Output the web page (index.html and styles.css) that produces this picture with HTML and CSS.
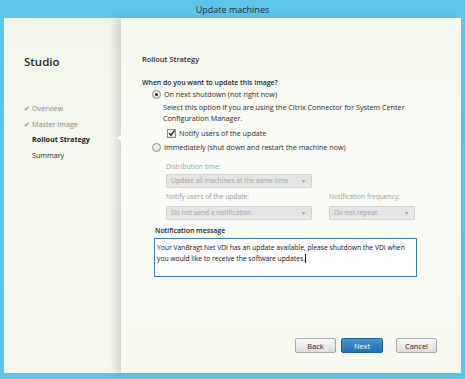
FILE: index.html
```html
<!DOCTYPE html>
<html>
<head>
<meta charset="utf-8">
<link rel="stylesheet" href="styles.css">
</head>
<body>
<div class="titlebar">Update machines</div>
<div class="frame">
  <aside class="sidebar">
    <div class="brand">Studio</div>
    <ul class="steps">
      <li class="done"><span class="tick">✔</span>Overview</li>
      <li class="done"><span class="tick">✔</span>Master Image</li>
      <li class="current">Rollout Strategy</li>
      <li>Summary</li>
    </ul>
  </aside>
  <main class="main">
    <span class="notch"></span>
    <h2 class="heading">Rollout Strategy</h2>
    <div class="question">When do you want to update this image?</div>
    <div class="option"><span class="radio checked"></span>On next shutdown (not right now)</div>
    <div class="desc">Select this option if you are using the Citrix Connector for System Center<br>Configuration Manager.</div>
    <div class="check-row"><span class="checkbox">
      <svg width="8" height="8" viewBox="0 0 8 8"><path d="M1.2 4.2 L3.2 6.3 L7 1.2" fill="none" stroke="#222" stroke-width="1.4"/></svg>
    </span>Notify users of the update</div>
    <div class="option second"><span class="radio"></span>Immediately (shut down and restart the machine now)</div>
    <div class="disabled">
      <div class="label first">Distribution time:</div>
      <div class="select wide">Update all machines at the same time<span class="arrow">▾</span></div>
      <div class="pair">
        <div class="col">
          <div class="label">Notify users of the update:</div>
          <div class="select wide">Do not send a notification<span class="arrow">▾</span></div>
        </div>
        <div class="col">
          <div class="label">Notification frequency:</div>
          <div class="select narrow">Do not repeat<span class="arrow">▾</span></div>
        </div>
      </div>
    </div>
    <div class="msg-label">Notification message</div>
    <div class="textarea">Your VanBragt.Net VDI has an update available, please shutdown the VDI when<br>you would like to receive the software updates.<span class="caret"></span></div>
    <div class="buttons">
      <button class="btn">Back</button>
      <button class="btn primary">Next</button>
      <button class="btn cancel">Cancel</button>
    </div>
  </main>
</div>
</body>
</html>
```
FILE: styles.css
```css
html, body {
  margin: 0;
  padding: 0;
}
body {
  width: 465px;
  height: 379px;
  background: #5cc6ea;
  font-family: "Open Sans", "Noto Sans", sans-serif;
  font-size: 7.2px;
  color: #2b2b2b;
  overflow: hidden;
}
.titlebar {
  height: 18px;
  line-height: 19px;
  text-align: center;
  font-size: 9px;
  color: #1c2a33;
}
.frame {
  margin: 0 4px;
  height: 355px;
  display: flex;
  background: #f3f6ea;
}
.sidebar {
  width: 117px;
  flex: none;
  background: linear-gradient(180deg, #f1f5e8 0%, #f6f8f0 40%, #f4f7ec 100%);
  padding: 36px 0 0 0;
  box-sizing: border-box;
}
.brand {
  font-size: 11.5px;
  font-weight: 600;
  color: #2a2a2a;
  padding-left: 20px;
  line-height: 16px;
}
.steps {
  list-style: none;
  margin: 31px 0 0 0;
  padding: 0 0 0 28px;
}
.steps li {
  line-height: 15.6px;
  height: 15.6px;
  position: relative;
  color: #222;
}
.steps li.done {
  color: #8a8a8a;
}
.steps li.current {
  font-weight: 700;
  color: #1a1a1a;
}
.tick {
  position: absolute;
  left: -8px;
  font-size: 6.5px;
  color: #8a8a8a;
}
.main {
  flex: 1;
  position: relative;
  display: flex;
  flex-direction: column;
  padding: 36px 24px 20px 21px;
  background: linear-gradient(180deg, #f6f8ef 0%, #fafbf6 45%, #f7f9f0 100%);
  box-shadow: -5px 0 7px rgba(60, 60, 60, 0.18);
  min-width: 0;
}
.notch {
  position: absolute;
  left: -4px;
  top: 117px;
  width: 0;
  height: 0;
  border-top: 3.5px solid transparent;
  border-bottom: 3.5px solid transparent;
  border-right: 4px solid #ffffff;
}
.heading {
  margin: 0;
  font-size: 7.4px;
  font-weight: 600;
  line-height: 11px;
  color: #2a2a2a;
}
.question {
  margin-top: 12px;
  line-height: 11px;
  font-weight: 600;
  font-size: 6.9px;
  color: #1e1e1e;
}
.option {
  margin-top: 1px;
  margin-left: 10px;
  display: flex;
  align-items: center;
  line-height: 11px;
  height: 11px;
}
.option.second {
  margin-top: 3px;
}
.radio {
  width: 7px;
  height: 7px;
  border: 1px solid #8a8a8a;
  border-radius: 50%;
  background: linear-gradient(180deg, #f4f4f4, #dedede);
  margin-right: 3px;
  position: relative;
  flex: none;
}
.radio.checked::after {
  content: "";
  position: absolute;
  left: 2px;
  top: 2px;
  width: 3px;
  height: 3px;
  border-radius: 50%;
  background: #222;
}
.desc {
  margin-top: 2px;
  margin-left: 21px;
  line-height: 11px;
}
.check-row {
  margin-top: 4px;
  margin-left: 25px;
  display: flex;
  align-items: center;
  height: 11px;
  line-height: 11px;
}
.checkbox {
  width: 7px;
  height: 7px;
  border: 1px solid #8a8a8a;
  background: linear-gradient(180deg, #f6f6f6, #e2e2e2);
  margin-right: 3px;
  display: flex;
  flex: none;
}
.checkbox svg {
  margin: -1px 0 0 -0.5px;
}
.disabled {
  margin-left: 24px;
  color: #9a9a9a;
  font-size: 6.7px;
}
.label {
  line-height: 11px;
  margin-top: 3px;
}
.label.first {
  margin-top: 8px;
}
.select {
  margin-top: 2px;
  height: 14px;
  box-sizing: border-box;
  border: 1px solid #d2d2d2;
  background: #e6e6e6;
  border-radius: 1px;
  padding-left: 4px;
  line-height: 12px;
  color: #a5a5a5;
  position: relative;
}
.pair .select {
  margin-top: 4px;
}
.select.wide {
  width: 146px;
}
.select.narrow {
  width: 86px;
}
.arrow {
  position: absolute;
  right: 6px;
  top: 0;
  font-size: 6px;
  color: #a0a0a0;
}
.pair {
  display: flex;
  gap: 17px;
}
.msg-label {
  margin-top: 5px;
  margin-left: 13px;
  line-height: 11px;
  font-weight: 600;
  font-size: 6.9px;
  color: #1e1e1e;
}
.textarea {
  margin-top: 2px;
  margin-left: 12px;
  width: 263px;
  height: 39px;
  box-sizing: border-box;
  border: 1px solid #3d7db3;
  background: #ffffff;
  padding: 3px 2px;
  line-height: 11px;
  font-size: 6.75px;
  color: #111;
  white-space: nowrap;
  overflow: hidden;
}
.caret {
  display: inline-block;
  width: 1px;
  height: 9px;
  background: #111;
  vertical-align: -2px;
}
.buttons {
  margin-top: auto;
  display: flex;
  justify-content: flex-end;
  gap: 5px;
}
.btn {
  font-family: inherit;
  font-size: 7.4px;
  height: 15px;
  width: 41px;
  padding: 0;
  border: 1px solid #a9a9a9;
  border-radius: 2px;
  background: linear-gradient(180deg, #f6f6f6 0%, #ebebeb 50%, #dcdcdc 100%);
  color: #222;
}
.btn.primary {
  width: 42px;
  border-color: #1e5f94;
  background: linear-gradient(180deg, #4a9ad6 0%, #2f82c3 50%, #2372b4 100%);
  color: #ffffff;
}
.btn.cancel {
  margin-left: 8px;
}
```
